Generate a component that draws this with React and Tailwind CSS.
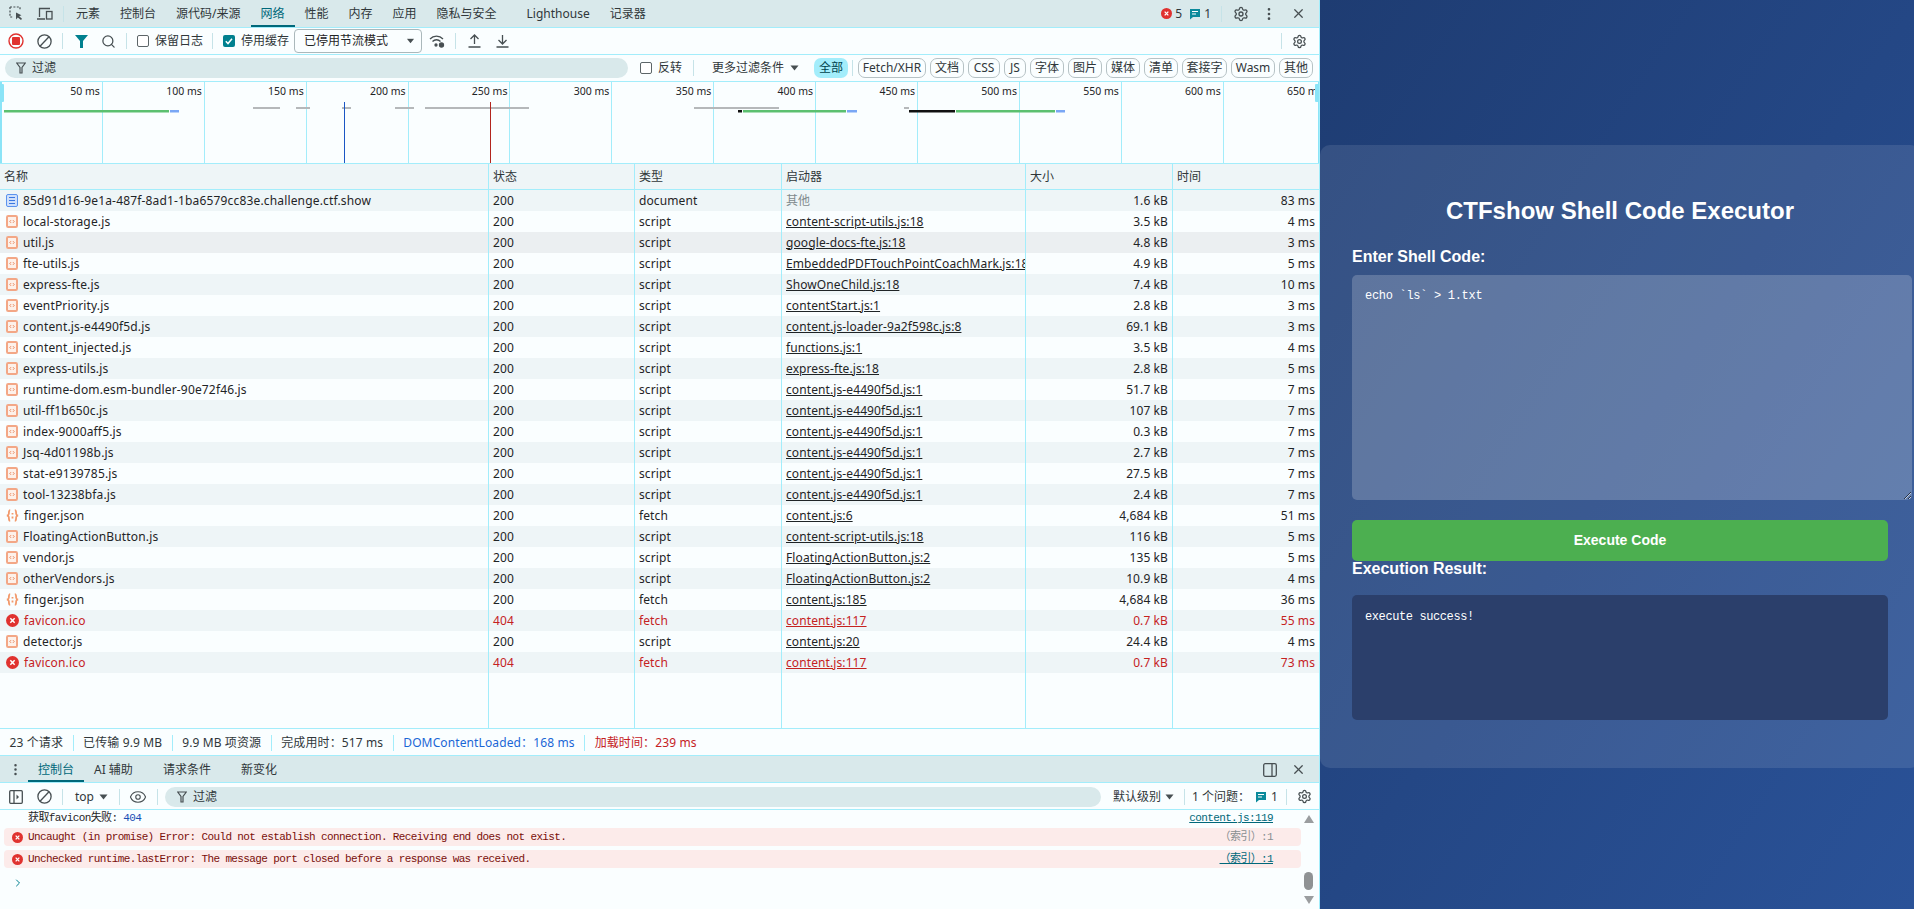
import { Search, EllipsisVertical, X, Settings, Eye, ChevronRight } from 'lucide-react'

const uiFont = "font-['Noto_Sans','Noto_Sans_CJK_SC',sans-serif]"
const lineColor = 'border-[#a3edfb]'

const rows = [
  ['85d91d16-9e1a-487f-8ad1-1ba6579cc83e.challenge.ctf.show', '200', 'document', '其他', '1.6 kB', '83 ms', 'doc'],
  ['local-storage.js', '200', 'script', 'content-script-utils.js:18', '3.5 kB', '4 ms', 'js'],
  ['util.js', '200', 'script', 'google-docs-fte.js:18', '4.8 kB', '3 ms', 'js'],
  ['fte-utils.js', '200', 'script', 'EmbeddedPDFTouchPointCoachMark.js:18', '4.9 kB', '5 ms', 'js'],
  ['express-fte.js', '200', 'script', 'ShowOneChild.js:18', '7.4 kB', '10 ms', 'js'],
  ['eventPriority.js', '200', 'script', 'contentStart.js:1', '2.8 kB', '3 ms', 'js'],
  ['content.js-e4490f5d.js', '200', 'script', 'content.js-loader-9a2f598c.js:8', '69.1 kB', '3 ms', 'js'],
  ['content_injected.js', '200', 'script', 'functions.js:1', '3.5 kB', '4 ms', 'js'],
  ['express-utils.js', '200', 'script', 'express-fte.js:18', '2.8 kB', '5 ms', 'js'],
  ['runtime-dom.esm-bundler-90e72f46.js', '200', 'script', 'content.js-e4490f5d.js:1', '51.7 kB', '7 ms', 'js'],
  ['util-ff1b650c.js', '200', 'script', 'content.js-e4490f5d.js:1', '107 kB', '7 ms', 'js'],
  ['index-9000aff5.js', '200', 'script', 'content.js-e4490f5d.js:1', '0.3 kB', '7 ms', 'js'],
  ['Jsq-4d01198b.js', '200', 'script', 'content.js-e4490f5d.js:1', '2.7 kB', '7 ms', 'js'],
  ['stat-e9139785.js', '200', 'script', 'content.js-e4490f5d.js:1', '27.5 kB', '7 ms', 'js'],
  ['tool-13238bfa.js', '200', 'script', 'content.js-e4490f5d.js:1', '2.4 kB', '7 ms', 'js'],
  ['finger.json', '200', 'fetch', 'content.js:6', '4,684 kB', '51 ms', 'json'],
  ['FloatingActionButton.js', '200', 'script', 'content-script-utils.js:18', '116 kB', '5 ms', 'js'],
  ['vendor.js', '200', 'script', 'FloatingActionButton.js:2', '135 kB', '5 ms', 'js'],
  ['otherVendors.js', '200', 'script', 'FloatingActionButton.js:2', '10.9 kB', '4 ms', 'js'],
  ['finger.json', '200', 'fetch', 'content.js:185', '4,684 kB', '36 ms', 'json'],
  ['favicon.ico', '404', 'fetch', 'content.js:117', '0.7 kB', '55 ms', 'err'],
  ['detector.js', '200', 'script', 'content.js:20', '24.4 kB', '4 ms', 'js'],
  ['favicon.ico', '404', 'fetch', 'content.js:117', '0.7 kB', '73 ms', 'err'],
]

const filterChips = [
  ['Fetch/XHR', 'w-[68px]'],
  ['文档', 'w-[34px]'],
  ['CSS', 'w-[32px]'],
  ['JS', 'w-[22px]'],
  ['字体', 'w-[34px]'],
  ['图片', 'w-[34px]'],
  ['媒体', 'w-[34px]'],
  ['清单', 'w-[34px]'],
  ['套接字', 'w-[45px]'],
  ['Wasm', 'w-[44px]'],
  ['其他', 'w-[34px]'],
]

const ticks = [50, 100, 150, 200, 250, 300, 350, 400, 450, 500, 550, 600, 650]

const grayBars = [[253, 280], [296, 310], [342, 351], [395, 414], [425, 529], [694, 779], [734, 738], [904, 909]]
const greenBars = [[4, 169], [743, 846], [956, 1055]]
const blueBars = [[170, 179], [847, 857], [1056, 1065]]
const blackBars = [[738, 742], [909, 955]]

const ErrorIcon = ({ size = 12 }) => (
  <svg width={size} height={size} viewBox="0 0 12 12" className="shrink-0">
    <circle cx="6" cy="6" r="6" fill="#e0322f" />
    <path d="M4 4l4 4M8 4l-4 4" stroke="#fff" strokeWidth="1.4" />
  </svg>
)

const IssueIcon = () => (
  <svg width="12" height="12" viewBox="0 0 12 12" className="shrink-0">
    <path d="M1 1h10v8H4l-3 2.5z" fill="#0b8a9b" />
    <path d="M3 3.5h6M3 6h4" stroke="#fff" strokeWidth="1" />
  </svg>
)

const RowIcon = ({ type }) => {
  if (type === 'err') return <ErrorIcon size={13} />
  if (type === 'doc') {
    return (
      <svg width="12" height="13" viewBox="0 0 12 13" className="shrink-0">
        <rect x="0.5" y="0.5" width="11" height="12" rx="1.5" fill="#cfe0fb" stroke="#5b93ee" />
        <path d="M3 3.5h6M3 6.5h6M3 9.5h6" stroke="#3b78e0" strokeWidth="1" />
      </svg>
    )
  }
  if (type === 'json') {
    return (
      <svg width="13" height="13" viewBox="0 0 13 13" className="shrink-0" fill="none" stroke="#f29a6c" strokeWidth="1.8">
        <path d="M4.2 1.2C2.6 1.2 3 3.5 2.8 5S0.8 6.5 0.8 6.5 2.6 6.5 2.8 8 2.6 11.8 4.2 11.8" />
        <path d="M8.8 1.2c1.6 0 1.2 2.3 1.4 3.8s2 1.5 2 1.5-1.8 0-2 1.5.2 3.8-1.4 3.8" />
        <path d="M6.5 4v1.4M6.5 7.4v2" />
      </svg>
    )
  }
  return (
    <svg width="12" height="13" viewBox="0 0 12 13" className="shrink-0" fill="none">
      <rect x="1" y="1" width="10" height="11" rx="1.2" fill="#fdf1ea" stroke="#f3a786" strokeWidth="2" />
      <path d="M5 5.2L3.8 6.5 5 7.8M7 5.2l1.2 1.3L7 7.8" stroke="#e9855a" strokeWidth="1" />
    </svg>
  )
}

const Sep = ({ className = '' }) => <div className={`w-px h-4 bg-[#c6e3e8] shrink-0 ${className}`} />

const ClearIcon = () => (
  <svg width="15" height="15" viewBox="0 0 15 15" fill="none" stroke="#474f52" strokeWidth="1.3" className="shrink-0">
    <circle cx="7.5" cy="7.5" r="6.6" />
    <path d="M3 12.2L12 2.8" />
  </svg>
)

const FunnelOutline = () => (
  <svg width="10" height="12" viewBox="0 0 10 12" fill="none" stroke="#474f52" strokeWidth="1.2" className="shrink-0">
    <path d="M0.7 1h8.6L6 5.5V11H4V5.5z" />
  </svg>
)

const Check = ({ checked }) =>
  checked ? (
    <svg width="12" height="12" viewBox="0 0 12 12" className="shrink-0">
      <rect width="12" height="12" rx="2" fill="#00808f" />
      <path d="M2.8 6.2l2.2 2.3 4-4.8" stroke="#fff" strokeWidth="1.5" fill="none" />
    </svg>
  ) : (
    <div className="w-3 h-3 shrink-0 rounded-[2px] border border-[#5c6568] bg-white" />
  )

const Caret = ({ className = '' }) => (
  <svg width="9" height="6" viewBox="0 0 9 6" className={`shrink-0 ${className}`}>
    <path d="M0.5 0.5h8L4.5 5.5z" fill="#474f52" />
  </svg>
)

const Tab = ({ children, className = '' }) => (
  <div className={`h-full flex items-center px-[10px] shrink-0 ${className}`}>{children}</div>
)

const Cells = ({ children = [] }) => {
  const widths = ['w-[489px]', 'w-[146px]', 'w-[147px]', 'w-[244px]', 'w-[147px]', 'flex-1']
  return widths.map((w, i) => (
    <div
      key={w}
      className={`${w} h-full px-[4px] flex items-center overflow-hidden whitespace-nowrap shrink-0 ${i < 5 ? `border-r ${lineColor}` : ''} ${i >= 4 ? 'justify-end' : ''}`}
    >
      {children[i]}
    </div>
  ))
}

const NetworkRow = ({ row, index }) => {
  const [name, status, type, initiator, size, time, kind] = row
  const failed = kind === 'err'
  const striped = index % 2 === 0
  const bg = index === 2 ? 'bg-[#ebeff1]' : striped ? 'bg-[#eef5f7]' : 'bg-[#fafeff]'
  return (
    <div className={`flex h-[21px] shrink-0 tracking-[0.1px] ${bg} ${failed ? 'text-[#c5221f]' : 'text-[#1f2426]'}`}>
      <Cells>
        {[
          <span key="n" className="flex items-center gap-[5px] pl-[2px] tracking-[0.16px]">
            <RowIcon type={kind} />
            {name}
          </span>,
          status,
          type,
          kind === 'doc' ? <span key="i" className="text-[#7f8a8d]">{initiator}</span> : <span key="i" className="underline">{initiator}</span>,
          size,
          time,
        ]}
      </Cells>
    </div>
  )
}

const Overview = () => (
  <div className={`relative h-[82px] shrink-0 flex pl-px overflow-hidden border-b ${lineColor}`}>
    {ticks.map((t) => (
      <div key={t} className={`w-[101.9px] h-full shrink-0 border-r ${lineColor} pr-[2px] pt-[2px] text-right text-[10.5px] whitespace-nowrap text-[#1f2426]`}>
        {t} ms
      </div>
    ))}
    {/* waterfall summary */}
    <svg className="absolute left-0 top-0" width="1320" height="81">
      <rect x="0" y="0" width="2" height="81" fill="#8be4f7" />
      <rect x="0" y="2" width="4" height="18" rx="1" fill="#8be4f7" />
      <rect x="1315" y="2" width="4" height="18" rx="1" fill="#8be4f7" />
      <rect x="1318" y="0" width="2" height="81" fill="#8be4f7" />
      {grayBars.map(([a, b]) => <rect key={a} x={a} y="25" width={b - a} height="2" fill="#b5b8ba" />)}
      {greenBars.map(([a, b]) => <rect key={a} x={a} y="28" width={b - a} height="2.5" fill="#5cc070" />)}
      {blueBars.map(([a, b]) => <rect key={a} x={a} y="28" width={b - a} height="2.5" fill="#7aa7f5" />)}
      {blackBars.map(([a, b]) => <rect key={a} x={a} y="28" width={b - a} height="2.5" fill="#111" />)}
      <rect x="344" y="20" width="1" height="61" fill="#1a56c4" />
      <rect x="490" y="20" width="1" height="61" fill="#b3261e" />
    </svg>
  </div>
)

const TopTabs = () => (
  <div className={`h-[28px] shrink-0 flex items-center bg-[#d9e9eb] border-b ${lineColor} text-[#30373a]`}>
    <svg width="15" height="15" viewBox="0 0 15 15" fill="none" stroke="#474f52" className="ml-[9px] shrink-0">
      <path d="M1 1h10v3M1 1v10h3" strokeDasharray="2 1.4" strokeWidth="1.2" />
      <path d="M7 6.5v7l1.8-2 3.2 2.5 1-1.2-2.8-2.5 2.3-1z" fill="#474f52" stroke="none" />
    </svg>
    <svg width="16" height="14" viewBox="0 0 16 14" fill="none" stroke="#474f52" strokeWidth="1.3" className="ml-[13px] shrink-0">
      <path d="M2.5 10V1.5H13M0 12h8" />
      <rect x="9.5" y="4.5" width="5.5" height="7.5" />
    </svg>
    <Sep className="ml-[10px] mr-[2px]" />
    <Tab>元素</Tab>
    <Tab>控制台</Tab>
    <Tab>源代码/来源</Tab>
    <Tab className="relative text-[#00687a]">
      网络
      <div className="absolute left-0 right-0 bottom-0 h-[2px] bg-[#00687a]" />
    </Tab>
    <Tab>性能</Tab>
    <Tab>内存</Tab>
    <Tab>应用</Tab>
    <Tab>隐私与安全</Tab>
    <Tab className="ml-[10px]">Lighthouse</Tab>
    <Tab>记录器</Tab>
    <div className="flex-1" />
    <ErrorIcon size={11} />
    <span className="ml-[3px]">5</span>
    <div className="ml-[7px]"><IssueIcon /></div>
    <span className="ml-[3px]">1</span>
    <Sep className="ml-[10px]" />
    <Settings size={16} className="ml-[11px] text-[#474f52]" />
    <EllipsisVertical size={16} className="ml-[12px] text-[#474f52]" />
    <X size={15} className="ml-[14px] mr-[13px] text-[#474f52]" />
  </div>
)

const NetworkToolbar = () => (
  <div className={`h-[27px] shrink-0 flex items-center border-b ${lineColor} text-[#30373a]`}>
    <svg width="16" height="16" viewBox="0 0 16 16" className="ml-[8px] shrink-0">
      <circle cx="8" cy="8" r="7" fill="none" stroke="#e0322f" strokeWidth="1.4" />
      <rect x="4" y="4" width="8" height="8" rx="1" fill="#e0322f" />
    </svg>
    <div className="ml-[13px]"><ClearIcon /></div>
    <Sep className="ml-[10px]" />
    <svg width="13" height="13" viewBox="0 0 13 13" className="ml-[12px] shrink-0">
      <path d="M0 0h13L8 6v7H5V6z" fill="#00808f" />
    </svg>
    <Search size={15} className="ml-[13px] text-[#474f52]" />
    <Sep className="ml-[10px]" />
    <div className="ml-[10px]"><Check /></div>
    <span className="ml-[6px]">保留日志</span>
    <Sep className="ml-[9px]" />
    <div className="ml-[10px]"><Check checked /></div>
    <span className="ml-[6px]">停用缓存</span>
    <div className="ml-[5px] w-[128px] h-[24px] shrink-0 flex items-center justify-between pl-[9px] pr-[6px] rounded-[4px] border border-[#aab8bb] text-[#1f2426]">
      已停用节流模式
      <Caret className="scale-90" />
    </div>
    <svg width="16" height="14" viewBox="0 0 16 14" fill="none" stroke="#474f52" strokeWidth="1.3" className="ml-[7px] shrink-0">
      <path d="M1 5a9 9 0 0 1 13 0M3.5 7.5a5.5 5.5 0 0 1 8 0" />
      <circle cx="7" cy="11" r="1" fill="#474f52" />
      <circle cx="12.5" cy="11" r="2" fill="#474f52" />
    </svg>
    <Sep className="ml-[10px]" />
    <svg width="13" height="14" viewBox="0 0 13 14" fill="none" stroke="#474f52" strokeWidth="1.3" className="ml-[12px] shrink-0">
      <path d="M6.5 10V1.5M2.5 5l4-4 4 4M0.5 13h12" />
    </svg>
    <svg width="13" height="14" viewBox="0 0 13 14" fill="none" stroke="#474f52" strokeWidth="1.3" className="ml-[15px] shrink-0">
      <path d="M6.5 1v8.5M2.5 6l4 4 4-4M0.5 13h12" />
    </svg>
    <div className="flex-1" />
    <Sep />
    <Settings size={15} className="ml-[10px] mr-[12px] text-[#474f52]" />
  </div>
)

const FilterBar = () => (
  <div className={`h-[27px] shrink-0 flex items-center border-b ${lineColor} text-[#30373a]`}>
    <div className="ml-[5px] w-[623px] h-[20px] shrink-0 rounded-full bg-[#d9e9eb] flex items-center pl-[11px] gap-[6px]">
      <FunnelOutline />
      过滤
    </div>
    <div className="ml-[12px]"><Check /></div>
    <span className="ml-[6px]">反转</span>
    <Sep className="ml-[11px]" />
    <span className="ml-[18px]">更多过滤条件</span>
    <Caret className="ml-[6px]" />
    <div className="ml-[15px] w-[34px] h-[20px] shrink-0 rounded-[7px] bg-[#a3edfb] text-[#00424d] flex items-center justify-center">全部</div>
    <Sep className="ml-[4px] mr-[4px]" />
    <div className="flex gap-[4px] ml-px">
      {filterChips.map(([label, w]) => (
        <div key={label} className={`${w} h-[20px] rounded-[7px] border border-[#b6c2c5] flex items-center justify-center`}>{label}</div>
      ))}
    </div>
  </div>
)

const StatusBar = () => {
  const items = [
    ['23 个请求', 'text-[#30373a]'],
    ['已传输 9.9 MB', 'text-[#30373a]'],
    ['9.9 MB 项资源', 'text-[#30373a]'],
    ['完成用时：517 ms', 'text-[#30373a]'],
    ['DOMContentLoaded：168 ms', 'text-[#1a66d6]'],
    ['加载时间：239 ms', 'text-[#c5221f]'],
  ]
  return (
    <div className={`h-[28px] shrink-0 flex items-center pt-[2px] tracking-[0.12px] border-y ${lineColor}`}>
      {items.map(([label, color], i) => (
        <div key={label} className={`px-[9.5px] h-4 flex items-center whitespace-nowrap ${color} ${i < 5 ? `border-r ${lineColor}` : ''}`}>{label}</div>
      ))}
    </div>
  )
}

const ConsoleTabs = () => (
  <div className={`h-[27px] shrink-0 flex items-center pt-px bg-[#d9e9eb] border-b ${lineColor} text-[#30373a]`}>
    <EllipsisVertical size={15} className="ml-[8px] mr-[5px] text-[#474f52]" />
    <Tab className="relative text-[#00687a]">
      控制台
      <div className="absolute left-0 right-0 bottom-0 h-[2px] bg-[#00687a]" />
    </Tab>
    <Tab>AI 辅助</Tab>
    <Tab className="ml-[10px]">请求条件</Tab>
    <Tab className="ml-[10px]">新变化</Tab>
    <div className="flex-1" />
    <svg width="14" height="14" viewBox="0 0 14 14" fill="none" stroke="#474f52" strokeWidth="1.3" className="shrink-0">
      <rect x="0.7" y="0.7" width="12.6" height="12.6" rx="1.5" />
      <path d="M9 1v12" />
    </svg>
    <X size={15} className="ml-[14px] mr-[13px] text-[#474f52]" />
  </div>
)

const ConsoleToolbar = () => (
  <div className={`h-[27px] shrink-0 flex items-center pt-px border-b ${lineColor} text-[#30373a]`}>
    <svg width="14" height="14" viewBox="0 0 14 14" fill="none" stroke="#474f52" strokeWidth="1.3" className="ml-[9px] shrink-0">
      <rect x="0.7" y="0.7" width="12.6" height="12.6" rx="1" />
      <path d="M5 1v12" />
      <path d="M7.5 4.5L10 7l-2.5 2.5z" fill="#474f52" stroke="none" />
    </svg>
    <div className="ml-[14px]"><ClearIcon /></div>
    <Sep className="ml-[10px]" />
    <span className="ml-[12px]">top</span>
    <Caret className="ml-[5px]" />
    <Sep className="ml-[11px]" />
    <Eye size={18} strokeWidth={1.5} className="ml-[9px] text-[#474f52]" />
    <Sep className="ml-[10px]" />
    <div className="ml-[7px] w-[936px] h-[20px] shrink-0 rounded-full bg-[#d9e9eb] flex items-center pl-[12px] gap-[6px]">
      <FunnelOutline />
      过滤
    </div>
    <span className="ml-[12px]">默认级别</span>
    <Caret className="ml-[4px]" />
    <Sep className="ml-[10px]" />
    <span className="ml-[7px]">1 个问题：</span>
    <div className="ml-[5px]"><IssueIcon /></div>
    <span className="ml-[4px]">1</span>
    <Sep className="ml-[8px]" />
    <Settings size={15} className="ml-[10px] text-[#474f52]" />
  </div>
)

const ConsoleError = ({ text, source, sourceClass }) => (
  <div className="h-[18px] shrink-0 rounded-[4px] bg-[#fcebea] flex items-center pl-[8px] pr-[28px]">
    <ErrorIcon size={11} />
    <span className="ml-[5px] text-[#7a0f0b] whitespace-nowrap">{text}</span>
    <span className={`ml-auto ${sourceClass}`}>{source}</span>
  </div>
)

const ConsoleBody = () => (
  <div className="h-[99px] shrink-0 flex font-['Liberation_Mono','Noto_Sans_CJK_SC',monospace] text-[11px] tracking-[-0.62px]">
    <div className="w-[1301px] shrink-0 overflow-hidden pl-[4px] flex flex-col">
      <div className="h-[16px] shrink-0 flex items-center pl-[24px] pr-[28px] text-[#1f2426]">
        <span>获取favicon失败: <span className="text-[#1a4fb5]">404</span></span>
        <span className="ml-auto text-[#00687a] underline">content.js:119</span>
      </div>
      <div className="flex flex-col gap-[4px] mt-[2px]">
        <ConsoleError text="Uncaught (in promise) Error: Could not establish connection. Receiving end does not exist." source="（索引）:1" sourceClass="text-[#8a8f91]" />
        <ConsoleError text="Unchecked runtime.lastError: The message port closed before a response was received." source="（索引）:1" sourceClass="text-[#00687a] underline" />
      </div>
      <ChevronRight size={12} className="ml-[8px] mt-[9px] text-[#00808f]" />
    </div>
    {/* scrollbar */}
    <div className="flex-1 flex flex-col items-center pt-[5px] pb-[1px] pr-[3px]">
      <svg width="10" height="8" viewBox="0 0 10 8"><path d="M5 0l5 8H0z" fill="#9a9d9f" /></svg>
      <div className="w-[9px] h-[18px] mt-[49px] rounded-full bg-[#8f9294]" />
      <svg width="10" height="8" viewBox="0 0 10 8" className="mt-[6px]"><path d="M5 8L0 0h10z" fill="#9a9d9f" /></svg>
    </div>
  </div>
)

const ExecutorPage = () => (
  <div className="w-[594px] h-full shrink-0 overflow-hidden bg-gradient-to-br from-[#1e3c72] to-[#2a5298] pt-[145px] font-['Liberation_Sans',Arial,sans-serif] text-white">
    <div className="w-[600px] h-[623px] rounded-[10px] bg-white/10 p-[32px]">
      <h1 className="text-[24px] leading-[28px] font-bold text-center mt-[20px] mb-[23px]">CTFshow Shell Code Executor</h1>
      <label className="block text-[16px] leading-[18px] font-bold mb-[9px]">Enter Shell Code:</label>
      <textarea
        readOnly
        defaultValue="echo `ls` > 1.txt"
        className="block w-[560px] h-[225px] rounded-[5px] bg-white/20 pt-[12px] px-[13px] text-white font-['Liberation_Mono',monospace] text-[12px] tracking-[-0.3px] outline-none"
      />
      <button className="block w-[536px] h-[41px] mt-[20px] rounded-[5px] bg-[#4caf50] text-[14px] font-bold text-white">Execute Code</button>
      <h2 className="text-[16px] leading-[16px] font-bold mb-[18px]">Execution Result:</h2>
      <div className="w-[536px] h-[125px] rounded-[5px] bg-[#2b3f6b] pt-[13px] px-[13px] font-['Liberation_Mono',monospace] text-[12px] tracking-[-0.4px]">execute success!</div>
    </div>
  </div>
)

const App = () => {
  return (
    <div className={`flex w-[1914px] h-[909px] overflow-hidden text-[12px] bg-[#fafeff] ${uiFont}`}>
      <div className={`w-[1320px] h-full shrink-0 flex flex-col border-r ${lineColor}`}>
        <TopTabs />
        <NetworkToolbar />
        <FilterBar />
        <Overview />

        <div className="flex-1 min-h-0 flex flex-col">
          <div className={`flex h-[26px] shrink-0 bg-[#eef5f7] border-b ${lineColor} text-[#30373a]`}>
            <Cells>{['名称', '状态', '类型', '启动器', <span key="s" className="mr-auto">大小</span>, <span key="t" className="mr-auto">时间</span>]}</Cells>
          </div>
          {rows.map((row, i) => (
            <NetworkRow key={i} row={row} index={i} />
          ))}
          <div className="flex flex-1 min-h-0">
            <Cells />
          </div>
        </div>

        <StatusBar />
        <ConsoleTabs />
        <ConsoleToolbar />
        <ConsoleBody />
      </div>
      <ExecutorPage />
    </div>
  )
}

export default App
